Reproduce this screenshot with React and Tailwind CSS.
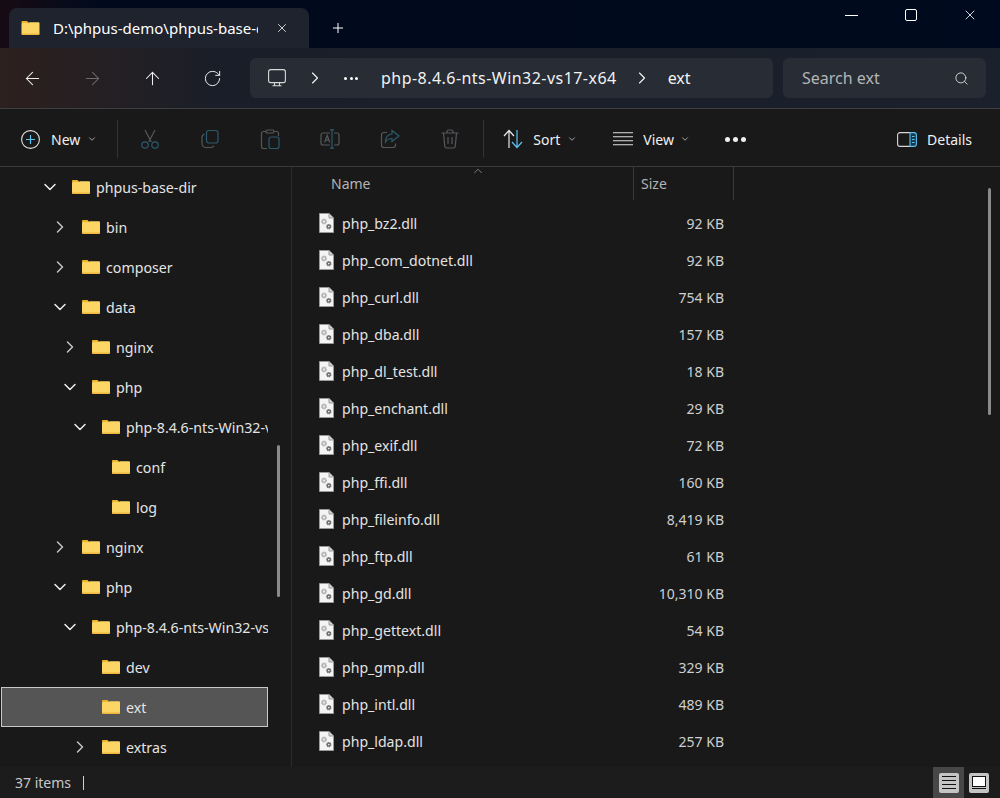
import React from 'react';
import { ArrowLeft, ArrowRight, ArrowUp, RotateCw, Search, X, Plus, ChevronDown, ChevronRight, ChevronUp } from 'lucide-react';

const FolderIcon = ({ className }) => (
  <svg className={className} viewBox="0 0 18 14">
    <path d="M0 1.2C0 .5.5 0 1.2 0h4.3l2 2.2H0z" fill="#f0b429" />
    <path d="M0 3c0-.5.4-.9.9-.9h5.4l1.9-.9h8.6c.7 0 1.2.5 1.2 1.2v10.4c0 .7-.5 1.2-1.2 1.2H1.2C.5 14 0 13.5 0 12.8z" fill="#fbd665" />
    <path d="M0 12.6h18v.2c0 .7-.5 1.2-1.2 1.2H1.2C.5 14 0 13.5 0 12.8z" fill="#eeb63f" />
  </svg>
);

const DllIcon = () => (
  <svg className="w-[15px] h-[20px] shrink-0" viewBox="0 0 15 20">
    <path d="M.5.5h9.5l4.5 4.500v14.500H.5z" fill="#f4f4f4" stroke="#9a9a9a" />
    <path d="M10 .5v4.500h4.500" fill="#d5d5d5" stroke="#9a9a9a" />
    <circle cx="5" cy="8.500" r="2.300" fill="#b4b4b4" stroke="#b4b4b4" strokeWidth="1.400" strokeDasharray="1.200 .6" />
    <circle cx="5" cy="8.500" r="1" fill="#f4f4f4" />
    <circle cx="9.800" cy="13.600" r="2" fill="#6d6d6d" stroke="#6d6d6d" strokeWidth="1.400" strokeDasharray="1.100 .5" />
    <circle cx="9.800" cy="13.600" r=".8" fill="#f4f4f4" />
  </svg>
);

const treeRows = [
  { name: 'phpus-base-dir', pad: 'pl-[42px]', open: true },
  { name: 'bin', pad: 'pl-[52px]', open: false },
  { name: 'composer', pad: 'pl-[52px]', open: false },
  { name: 'data', pad: 'pl-[52px]', open: true },
  { name: 'nginx', pad: 'pl-[62px]', open: false },
  { name: 'php', pad: 'pl-[62px]', open: true },
  { name: 'php-8.4.6-nts-Win32-vs17-x64', pad: 'pl-[72px]', open: true },
  { name: 'conf', pad: 'pl-[82px]', leaf: true },
  { name: 'log', pad: 'pl-[82px]', leaf: true },
  { name: 'nginx', pad: 'pl-[52px]', open: false },
  { name: 'php', pad: 'pl-[52px]', open: true },
  { name: 'php-8.4.6-nts-Win32-vs17-x64', pad: 'pl-[62px]', open: true },
  { name: 'dev', pad: 'pl-[72px]', leaf: true },
  { name: 'ext', pad: 'pl-[70px]', leaf: true, selected: true },
  { name: 'extras', pad: 'pl-[72px]', open: false },
];

const files = [
  ['php_bz2.dll', '92 KB'],
  ['php_com_dotnet.dll', '92 KB'],
  ['php_curl.dll', '754 KB'],
  ['php_dba.dll', '157 KB'],
  ['php_dl_test.dll', '18 KB'],
  ['php_enchant.dll', '29 KB'],
  ['php_exif.dll', '72 KB'],
  ['php_ffi.dll', '160 KB'],
  ['php_fileinfo.dll', '8,419 KB'],
  ['php_ftp.dll', '61 KB'],
  ['php_gd.dll', '10,310 KB'],
  ['php_gettext.dll', '54 KB'],
  ['php_gmp.dll', '329 KB'],
  ['php_intl.dll', '489 KB'],
  ['php_ldap.dll', '257 KB'],
];

const TitleBar = () => (
  <div className="h-12 flex bg-gradient-to-r from-[#170b14] via-[#010a1c] via-[10%] to-[#000a1e] shrink-0">
    <div className="ml-[9px] mt-2 w-[300px] h-10 rounded-t-lg bg-[#1e232d] flex items-center pl-3 text-white">
      <FolderIcon className="w-[19px] h-[14px] shrink-0" />
      <span className="ml-[13px] w-[205px] overflow-hidden whitespace-nowrap text-[15px]">D:\phpus-demo\phpus-base-dir</span>
      <X className="ml-[17px] w-[14px] h-[14px] text-[#e8e8e8]" strokeWidth={1.5} />
    </div>
    <div className="w-[58px] flex items-center justify-center mt-2 ml-0">
      <Plus className="w-[16px] h-[16px] text-white" strokeWidth={1.5} />
    </div>
    <div className="ml-auto flex h-[30px] text-white">
      <div className="w-[59px] flex items-center justify-center">
        <div className="w-[13px] h-px bg-white" />
      </div>
      <div className="w-[59px] flex items-center justify-center">
        <div className="w-3 h-3 border border-white rounded-[2px]" />
      </div>
      <div className="w-[59px] mr-[1px] flex items-center justify-center">
        <X className="w-[16px] h-[16px]" strokeWidth={1.25} />
      </div>
    </div>
  </div>
);

const AddressBar = () => (
  <div className="h-[61px] shrink-0 flex items-start pt-[10px] border-b border-[#3d3f43] bg-gradient-to-r from-[#2d201e] via-[#1a1e28] via-[22%] to-[#1a212c]">
    <div className="w-[2px]" />
    <div className="w-[60px] h-10 flex items-center justify-center text-[#efefef]">
      <ArrowLeft className="w-[21px] h-[21px]" strokeWidth={1.2} />
    </div>
    <div className="w-[60px] h-10 flex items-center justify-center text-[#6b6b6b]">
      <ArrowRight className="w-[21px] h-[21px]" strokeWidth={1.2} />
    </div>
    <div className="w-[60px] h-10 flex items-center justify-center text-[#efefef]">
      <ArrowUp className="w-[21px] h-[21px]" strokeWidth={1.2} />
    </div>
    <div className="w-[60px] h-10 flex items-center justify-center text-[#efefef]">
      <RotateCw className="w-[19px] h-[19px]" strokeWidth={1.25} />
    </div>
    <div className="ml-[8px] w-[523px] h-10 rounded-md bg-[#272c35] flex items-center text-[#f2f2f2] text-[16px]">
      <svg className="ml-[18px] w-[18px] h-[18px] shrink-0" viewBox="0 0 18 18" fill="none" stroke="#d8d8d8" strokeWidth="1.1">
        <rect x=".6" y=".6" width="16.8" height="13" rx="2.2" />
        <path d="M6.5 13.8v2.6M11.5 13.8v2.6M4.5 16.8h9" />
      </svg>
      <ChevronRight className="ml-[19px] w-5 h-5" strokeWidth={1.4} />
      <div className="ml-[19px] flex gap-[2.5px] w-[14px]">
        <span className="w-[3px] h-[3px] rounded-full bg-white" />
        <span className="w-[3px] h-[3px] rounded-full bg-white" />
        <span className="w-[3px] h-[3px] rounded-full bg-white" />
      </div>
      <span className="ml-[23px] whitespace-nowrap tracking-[0.46px]">php-8.4.6-nts-Win32-vs17-x64</span>
      <ChevronRight className="ml-[15px] w-5 h-5" strokeWidth={1.4} />
      <span className="ml-[16px]">ext</span>
    </div>
    <div className="ml-[10px] w-[203px] h-10 rounded-md bg-[#272c35] flex items-center pl-[19px] text-[#b5b5b5] text-[16px]">
      <span className="whitespace-nowrap">Search ext</span>
      <Search className="ml-auto mr-[17px] w-[15px] h-[15px] text-[#d8d8d8]" strokeWidth={1.5} />
    </div>
  </div>
);

const disabledIcons = [
  // cut
  <svg key="cut" className="w-5 h-5" viewBox="0 0 20 20" fill="none" strokeWidth="1.2">
    <path d="M5 1l6.3 12M15 1L8.700 13" stroke="#55585c" />
    <circle cx="5" cy="16" r="3.200" stroke="#2c5a6e" />
    <circle cx="15" cy="16" r="3.200" stroke="#2c5a6e" />
  </svg>,
  // copy
  <svg key="copy" className="w-5 h-5" viewBox="0 0 20 20" fill="none" strokeWidth="1.2">
    <rect x="6.500" y="1.500" width="11.500" height="12.500" rx="2.500" stroke="#2c5a6e" />
    <path d="M4.500 5C3 5.600 2 6.800 2 8.500v6C2 16.700 3.800 18.500 6 18.500h5c1.300 0 2.400-.7 3-1.800" stroke="#55585c" />
  </svg>,
  // paste
  <svg key="paste" className="w-5 h-5" viewBox="0 0 20 20" fill="none" strokeWidth="1.2">
    <path d="M6 2.500H3.500C2.400 2.500 1.500 3.400 1.500 4.500v13c0 1.100.9 2 2 2H7M14 2.500h2.500c1.100 0 2 .9 2 2V7" stroke="#55585c" />
    <rect x="6" y="1" width="8" height="3" rx="1.200" stroke="#55585c" />
    <rect x="9" y="8" width="10" height="11.500" rx="2" stroke="#2c5a6e" />
  </svg>,
  // rename
  <svg key="rename" className="w-5 h-5" viewBox="0 0 20 20" fill="none" strokeWidth="1.2">
    <path d="M10 4H3C1.800 4 1 4.900 1 6v8c0 1.100.8 2 2 2h7M14 4h3c1.200 0 2 .9 2 2v8c0 1.100-.8 2-2 2h-3" stroke="#55585c" />
    <path d="M4.500 13.500L7.200 6.500l2.700 7M5.500 11.200h3.500" stroke="#55585c" />
    <path d="M12 .8v18.400M10 .8h4M10 19.200h4" stroke="#2c5a6e" />
  </svg>,
  // share
  <svg key="share" className="w-5 h-5" viewBox="0 0 20 20" fill="none" strokeWidth="1.2">
    <path d="M7 3.500H4C2.600 3.500 1.500 4.600 1.500 6v10c0 1.400 1.100 2.500 2.500 2.500h9c1.400 0 2.500-1.100 2.500-2.500v-1.500" stroke="#55585c" />
    <path d="M12 1.500l7 5.500-7 5.500V9.500c-3 0-5 1-6.500 3.500 0-4.500 2.500-7.500 6.500-8z" stroke="#2c5a6e" />
  </svg>,
  // delete
  <svg key="delete" className="w-5 h-5" viewBox="0 0 20 20" fill="none" strokeWidth="1.2" stroke="#55585c">
    <path d="M1.500 4h17M7 4V2.800C7 1.800 7.800 1 8.800 1h2.400c1 0 1.800.8 1.800 1.800V4M3.500 4l1.200 13c.1 1.200 1 2 2.200 2h6.200c1.200 0 2.100-.8 2.200-2l1.200-13M8 8v7M12 8v7" />
  </svg>,
];

const Toolbar = () => (
  <div className="h-[58px] shrink-0 flex items-center pt-[3px] bg-[#191919] border-b border-[#3a3a3a] text-[14px] text-[#f0f0f0]">
    <svg className="ml-[21px] w-[19px] h-[19px] shrink-0" viewBox="0 0 19 19" fill="none">
      <circle cx="9.500" cy="9.500" r="8.900" stroke="#e0e0e0" strokeWidth="1.1" />
      <path d="M9.500 5v9M5 9.500h9" stroke="#5cc4f2" strokeWidth="1.200" />
    </svg>
    <span className="ml-[11px]">New</span>
    <ChevronDown className="ml-[7px] w-[10px] h-[10px] text-[#c0c0c0]" strokeWidth={2} />
    <div className="ml-[20px] w-px h-[38px] bg-[#333333]" />
    <div className="ml-[2px] flex">
      {disabledIcons.map((icon) => (
        <div key={icon.key} className="w-[60px] flex justify-center">{icon}</div>
      ))}
    </div>
    <div className="ml-[3px] w-px h-[38px] bg-[#333333]" />
    <svg className="ml-[19px] w-5 h-5 shrink-0" viewBox="0 0 20 20" fill="none" strokeWidth="1.200">
      <path d="M6 19V2M1 7l5-5.500L11 7" stroke="#e8e8e8" />
      <path d="M14 1v17M9 13l5 5.500 5-5.500" stroke="#5cc4f2" />
    </svg>
    <span className="ml-[10px]">Sort</span>
    <ChevronDown className="ml-[7px] w-[10px] h-[10px] text-[#c0c0c0]" strokeWidth={2} />
    <svg className="ml-[36px] w-5 h-[14px] shrink-0" viewBox="0 0 20 14" stroke="#e0e0e0" strokeWidth="1.100">
      <path d="M0 .8h20M0 4.800h20M0 8.800h20M0 12.800h20" />
    </svg>
    <span className="ml-[10px]">View</span>
    <ChevronDown className="ml-[6px] w-[10px] h-[10px] text-[#c0c0c0]" strokeWidth={2} />
    <div className="ml-[35px] flex gap-[3px]">
      <span className="w-[5px] h-[5px] rounded-full bg-[#f0f0f0]" />
      <span className="w-[5px] h-[5px] rounded-full bg-[#f0f0f0]" />
      <span className="w-[5px] h-[5px] rounded-full bg-[#f0f0f0]" />
    </div>
    <svg className="ml-auto w-5 h-[15px] shrink-0" viewBox="0 0 20 15" fill="none">
      <path d="M13 .6H3C1.600.6.600 1.600.600 3v9c0 1.400 1 2.400 2.400 2.400h10" stroke="#d8d8d8" strokeWidth="1.100" />
      <path d="M13 .6h4c1.400 0 2.400 1 2.400 2.400v9c0 1.400-1 2.400-2.400 2.400h-4z" stroke="#5cc4f2" strokeWidth="1.100" fill="#17394a" />
      <path d="M15 4.500h2.500M15 7.500h2.500M15 10.500h2.500" stroke="#5cc4f2" />
    </svg>
    <span className="ml-[10px] mr-[28px]">Details</span>
  </div>
);

const TreeRow = ({ row }) => (
  <div className={`h-10 flex items-center text-[14.2px] text-[#e4e4e4] ${row.pad} ${row.selected ? 'bg-[#555555] border border-[#c8c8c8] ml-px' : ''}`}>
    <div className="w-4 flex justify-center shrink-0">
      {!row.leaf && (row.open
        ? <ChevronDown className="w-5 h-5 shrink-0 text-[#eeeeee]" strokeWidth={1.8} />
        : <ChevronRight className="w-5 h-5 shrink-0 text-[#c4c4c4]" strokeWidth={1.8} />)}
    </div>
    <FolderIcon className="ml-[14px] w-[18px] h-[14px] shrink-0" />
    <span className="ml-[6px] pt-[2px] whitespace-nowrap">{row.name}</span>
  </div>
);

const Sidebar = () => (
  <div className="w-[292px] shrink-0 flex border-r border-[#2a2a2a] h-full">
    <div className="w-[268px] overflow-hidden shrink-0">
      {treeRows.map((row, i) => (
        <TreeRow key={i} row={row} />
      ))}
    </div>
    <div className="ml-[9px] w-[3px] h-[152px] mt-[278px] rounded-full bg-[#8a8a8a]" />
  </div>
);

const FileList = () => (
  <div className="relative flex-1 h-full overflow-hidden">
    <div className="h-[37px] flex text-[14px] text-[#b4b4b4]">
      <div className="relative w-[342px] h-[33px] pl-[39px] pt-[6px] border-r border-[#3a3a3a]">
        Name
        <ChevronUp className="absolute right-[148px] -top-[3px] w-[14px] h-[14px] text-[#a0a0a0]" strokeWidth={1.25} />
      </div>
      <div className="w-[100px] h-[33px] pl-[7px] pt-[6px] border-r border-[#3a3a3a]">Size</div>
    </div>
    {files.map(([name, size]) => (
      <div key={name} className="h-[37px] flex items-center text-[14.1px] text-[#e4e4e4]">
        <div className="ml-[27px]"><DllIcon /></div>
        <span className="ml-2 pt-[2px] w-[282px] whitespace-nowrap">{name}</span>
        <span className="pt-[2px] w-[100px] text-right text-[#cfcfcf] text-[14px]">{size}</span>
      </div>
    ))}
    <div className="absolute right-[9px] top-[21px] w-[3px] h-[227px] rounded-full bg-[#8a8a8a]" />
  </div>
);

const StatusBar = () => (
  <div className="h-[31px] shrink-0 flex items-center text-[14px] text-[#c8c8c8] bg-[#1c1c1c]">
    <span className="ml-[15px]">37 items</span>
    <div className="ml-3 w-px h-[14px] bg-[#d0d0d0]" />
    <div className="ml-auto w-[31px] h-[31px] bg-[#474747] flex items-center justify-center">
      <div className="w-5 h-5 rounded-[2px] bg-[#c4c4c4] flex flex-col justify-center gap-[3px] px-[3px]">
        <div className="h-px bg-[#111111]" />
        <div className="h-px bg-[#111111]" />
        <div className="h-px bg-[#111111]" />
        <div className="h-px bg-[#111111]" />
      </div>
    </div>
    <div className="ml-[5px] mr-[11px] w-5 h-5 rounded-[2px] bg-[#c4c4c4] p-[3px] flex flex-col gap-px">
      <div className="h-[11px] bg-white border border-[#111111]" />
      <div className="h-px bg-[#111111]" />
    </div>
  </div>
);

export default function App() {
  return (
    <div className="w-[1000px] h-[798px] flex flex-col overflow-hidden bg-[#191919] font-['Noto_Sans',sans-serif]">
      <TitleBar />
      <AddressBar />
      <Toolbar />
      <div className="flex flex-1 min-h-0 overflow-hidden">
        <Sidebar />
        <FileList />
      </div>
      <StatusBar />
    </div>
  );
}
